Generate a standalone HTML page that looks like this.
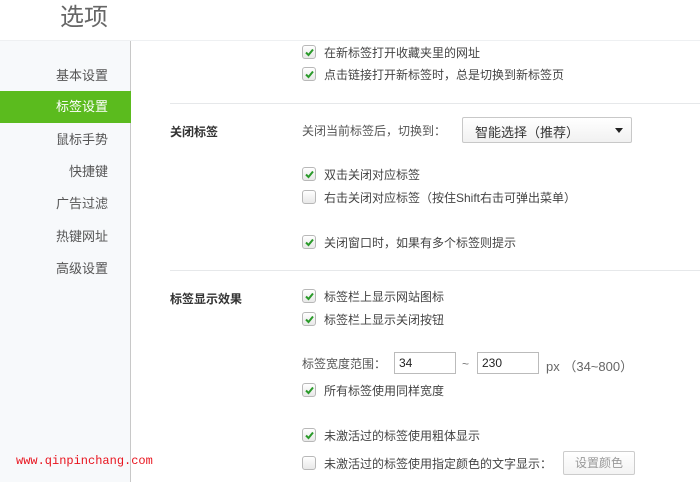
<!DOCTYPE html>
<html><head><meta charset="utf-8"><style>
*{margin:0;padding:0;box-sizing:border-box}
body{width:700px;height:482px;overflow:hidden;background:#fff;font-family:"Liberation Sans","Noto Sans CJK SC",sans-serif;font-size:12px;color:#444;position:relative}
.a{position:absolute;white-space:nowrap}
.title{left:60px;top:3px;font-size:24px;color:#666;line-height:30px}
.hd{left:0;top:40px;width:700px;height:1px;background:#eef0f2}
.side{left:0;top:41px;width:131px;height:441px;background:#f7f9fb;border-right:1px solid #c8c8c8}
.nav{left:8px;width:100px;text-align:right;font-size:13px;color:#555;line-height:16px}
.act{left:0;top:91px;width:131px;height:32px;background:#5bbb1e}
.cb{width:14px;height:14px;border:1px solid #b8b8b8;border-radius:3px;background:linear-gradient(#fff,#e8e8e8)}
.cb svg{position:absolute;left:1px;top:1px}
.t{font-size:12px;color:#444;line-height:14px}
.sec{font-weight:bold;color:#333;font-size:12px}
.line{left:170px;width:530px;height:1px;background:#e6e8ea}
.in{height:22px;border:1px solid #bbb;background:#fff;font-size:12px;color:#222;padding:3px 4px;line-height:14px}
</style></head><body>
<div class="a title">选项</div>
<div class="a hd"></div>
<div class="a side"></div>
<div class="a act"></div>
<div class="a nav" style="top:68px">基本设置</div>
<div class="a nav" style="top:99px;color:#fff">标签设置</div>
<div class="a nav" style="top:132px">鼠标手势</div>
<div class="a nav" style="top:164px">快捷键</div>
<div class="a nav" style="top:196px">广告过滤</div>
<div class="a nav" style="top:229px">热键网址</div>
<div class="a nav" style="top:261px">高级设置</div>

<div class="a line" style="top:103px"></div>
<div class="a line" style="top:270px"></div>
<div class="a sec" style="left:170px;top:123px">关闭标签</div>
<div class="a sec" style="left:170px;top:290px">标签显示效果</div>

<div class="a t" style="left:302px;top:124px;color:#555">关闭当前标签后，切换到：</div>
<div class="a" style="left:462px;top:117px;width:170px;height:26px;border:1px solid #c8c8c8;border-radius:2px;background:linear-gradient(#fff,#f1f1f1);font-size:13px;color:#333;padding:4px 0 0 12px">智能选择（推荐）<span style="position:absolute;right:8px;top:10px;width:0;height:0;border-left:4px solid transparent;border-right:4px solid transparent;border-top:5px solid #222"></span></div>

<div class="a cb" style="left:302px;top:45px"><svg width="11" height="11" viewBox="0 0 11 11"><path d="M2 5.5 L4.5 8 L9 2.5" stroke="#2a9a2a" stroke-width="2" fill="none"/></svg></div>
<div class="a t" style="left:324px;top:46px">在新标签打开收藏夹里的网址</div>
<div class="a cb" style="left:302px;top:67px"><svg width="11" height="11" viewBox="0 0 11 11"><path d="M2 5.5 L4.5 8 L9 2.5" stroke="#2a9a2a" stroke-width="2" fill="none"/></svg></div>
<div class="a t" style="left:324px;top:68px">点击链接打开新标签时，总是切换到新标签页</div>

<div class="a cb" style="left:302px;top:167px"><svg width="11" height="11" viewBox="0 0 11 11"><path d="M2 5.5 L4.5 8 L9 2.5" stroke="#2a9a2a" stroke-width="2" fill="none"/></svg></div>
<div class="a t" style="left:324px;top:168px">双击关闭对应标签</div>
<div class="a cb" style="left:302px;top:190px"></div>
<div class="a t" style="left:324px;top:191px">右击关闭对应标签（按住Shift右击可弹出菜单）</div>
<div class="a cb" style="left:302px;top:235px"><svg width="11" height="11" viewBox="0 0 11 11"><path d="M2 5.5 L4.5 8 L9 2.5" stroke="#2a9a2a" stroke-width="2" fill="none"/></svg></div>
<div class="a t" style="left:324px;top:236px">关闭窗口时，如果有多个标签则提示</div>

<div class="a cb" style="left:302px;top:289px"><svg width="11" height="11" viewBox="0 0 11 11"><path d="M2 5.5 L4.5 8 L9 2.5" stroke="#2a9a2a" stroke-width="2" fill="none"/></svg></div>
<div class="a t" style="left:324px;top:290px">标签栏上显示网站图标</div>
<div class="a cb" style="left:302px;top:312px"><svg width="11" height="11" viewBox="0 0 11 11"><path d="M2 5.5 L4.5 8 L9 2.5" stroke="#2a9a2a" stroke-width="2" fill="none"/></svg></div>
<div class="a t" style="left:324px;top:313px">标签栏上显示关闭按钮</div>

<div class="a t" style="left:302px;top:357px;color:#555">标签宽度范围：</div>
<div class="a in" style="left:394px;top:352px;width:62px">34</div>
<div class="a t" style="left:462px;top:357px;color:#777">~</div>
<div class="a in" style="left:477px;top:352px;width:62px">230</div>
<div class="a" style="left:546px;top:356px;font-size:13px;color:#666">px （34~800）</div>
<div class="a cb" style="left:302px;top:383px"><svg width="11" height="11" viewBox="0 0 11 11"><path d="M2 5.5 L4.5 8 L9 2.5" stroke="#2a9a2a" stroke-width="2" fill="none"/></svg></div>
<div class="a t" style="left:324px;top:384px">所有标签使用同样宽度</div>

<div class="a cb" style="left:302px;top:428px"><svg width="11" height="11" viewBox="0 0 11 11"><path d="M2 5.5 L4.5 8 L9 2.5" stroke="#2a9a2a" stroke-width="2" fill="none"/></svg></div>
<div class="a t" style="left:324px;top:429px">未激活过的标签使用粗体显示</div>
<div class="a cb" style="left:302px;top:456px"></div>
<div class="a t" style="left:324px;top:457px">未激活过的标签使用指定颜色的文字显示：</div>
<div class="a" style="left:563px;top:451px;width:72px;height:24px;border:1px solid #ccc;border-radius:2px;background:linear-gradient(#fff,#f3f3f3);color:#999;font-size:12px;text-align:center;line-height:22px">设置颜色</div>

<div class="a" style="left:16px;top:454px;font-family:'Liberation Mono',monospace;font-size:12px;color:#e8141e">www.qinpinchang.com</div>
</body></html>
